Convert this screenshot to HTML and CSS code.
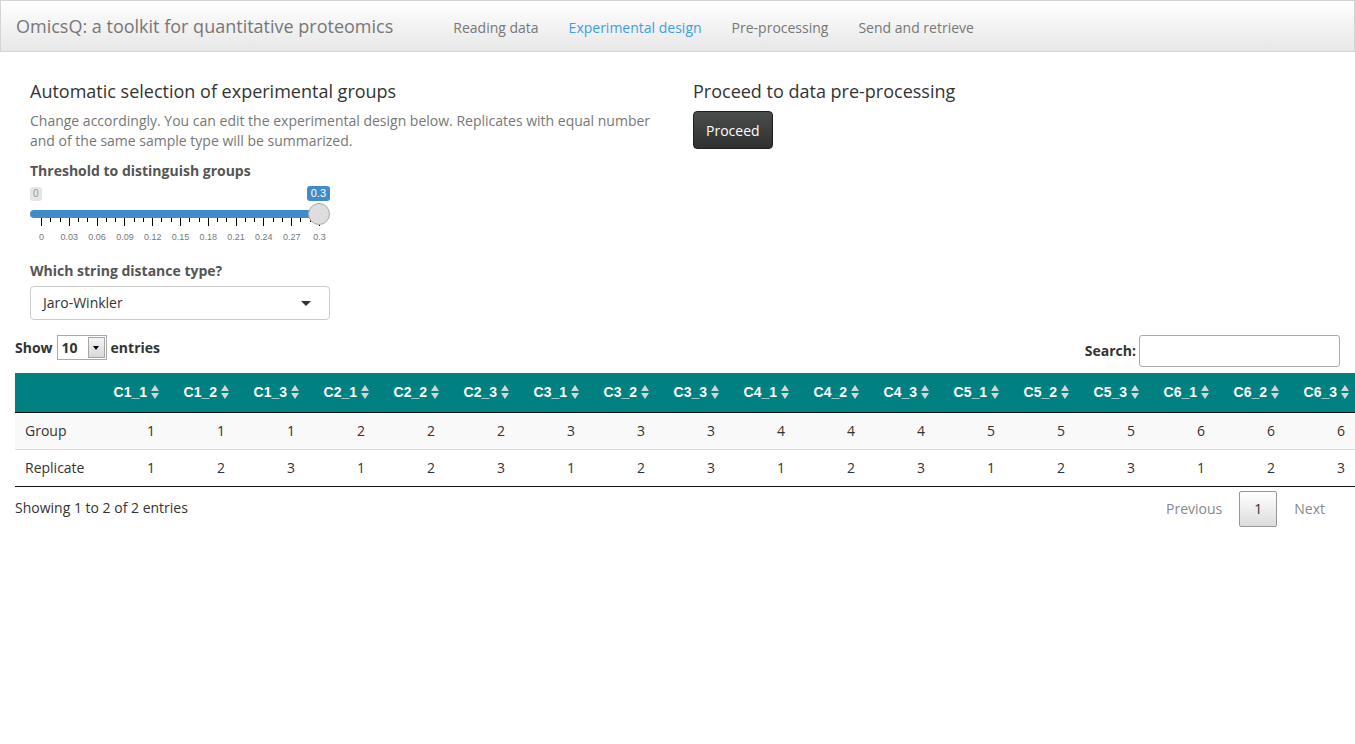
FILE: index.html
```html
<!DOCTYPE html>
<html>
<head>
<meta charset="utf-8">
<title>OmicsQ</title>
<link rel="stylesheet" href="styles.css">
</head>
<body>
<nav class="navbar">
  <span class="brand">OmicsQ: a toolkit for quantitative proteomics</span>
  <ul class="nav">
    <li><a>Reading data</a></li>
    <li class="active"><a>Experimental design</a></li>
    <li><a>Pre-processing</a></li>
    <li><a>Send and retrieve</a></li>
  </ul>
</nav>
<main class="content">
  <div class="top-row">
    <section class="col-left">
      <h4>Automatic selection of experimental groups</h4>
      <p class="help">Change accordingly. You can edit the experimental design below. Replicates with equal number and of the same sample type will be summarized.</p>
      <div class="form-group">
        <label class="ctl-label">Threshold to distinguish groups</label>
        <div class="irs">
          <div class="irs-labels">
            <span class="irs-min">0</span>
            <span class="irs-from">0.3</span>
          </div>
          <div class="irs-track">
            <div class="irs-bar"></div>
            <span class="irs-handle"></span>
          </div>
          <div class="irs-grid" id="grid"></div>
          <div class="irs-grid-text">
            <span><i>0</i></span><span><i>0.03</i></span><span><i>0.06</i></span><span><i>0.09</i></span><span><i>0.12</i></span><span><i>0.15</i></span><span><i>0.18</i></span><span><i>0.21</i></span><span><i>0.24</i></span><span><i>0.27</i></span><span><i>0.3</i></span>
          </div>
        </div>
      </div>
      <div class="form-group">
        <label class="ctl-label">Which string distance type?</label>
        <div class="selectize">
          <span>Jaro-Winkler</span>
          <span class="caret"></span>
        </div>
      </div>
    </section>
    <section class="col-right">
      <h4>Proceed to data pre-processing</h4>
      <button class="btn-dark">Proceed</button>
    </section>
  </div>

  <div class="dt-wrapper">
    <div class="dt-top">
      <div class="dt-length">
        <b>Show</b>
        <span class="native-select"><span class="val">10</span><span class="arrow-btn"><span class="tri"></span></span></span>
        <b>entries</b>
      </div>
      <div class="dt-filter">
        <b>Search:</b>
        <span class="search-input"></span>
      </div>
    </div>
    <div class="table-clip">
      <table class="dt">
        <colgroup>
          <col class="c-first">
          <col span="18" class="c-num">
        </colgroup>
        <thead>
          <tr>
            <th class="blank"></th>
            <th>C1_1<span class="sort"></span></th>
            <th>C1_2<span class="sort"></span></th>
            <th>C1_3<span class="sort"></span></th>
            <th>C2_1<span class="sort"></span></th>
            <th>C2_2<span class="sort"></span></th>
            <th>C2_3<span class="sort"></span></th>
            <th>C3_1<span class="sort"></span></th>
            <th>C3_2<span class="sort"></span></th>
            <th>C3_3<span class="sort"></span></th>
            <th>C4_1<span class="sort"></span></th>
            <th>C4_2<span class="sort"></span></th>
            <th>C4_3<span class="sort"></span></th>
            <th>C5_1<span class="sort"></span></th>
            <th>C5_2<span class="sort"></span></th>
            <th>C5_3<span class="sort"></span></th>
            <th>C6_1<span class="sort"></span></th>
            <th>C6_2<span class="sort"></span></th>
            <th>C6_3<span class="sort"></span></th>
          </tr>
        </thead>
        <tbody>
          <tr class="odd">
            <td>Group</td>
            <td>1</td><td>1</td><td>1</td><td>2</td><td>2</td><td>2</td><td>3</td><td>3</td><td>3</td>
            <td>4</td><td>4</td><td>4</td><td>5</td><td>5</td><td>5</td><td>6</td><td>6</td><td>6</td>
          </tr>
          <tr class="even">
            <td>Replicate</td>
            <td>1</td><td>2</td><td>3</td><td>1</td><td>2</td><td>3</td><td>1</td><td>2</td><td>3</td>
            <td>1</td><td>2</td><td>3</td><td>1</td><td>2</td><td>3</td><td>1</td><td>2</td><td>3</td>
          </tr>
        </tbody>
      </table>
    </div>
    <div class="dt-bottom">
      <div class="dt-info">Showing 1 to 2 of 2 entries</div>
      <div class="dt-paginate">
        <span class="pg disabled">Previous</span>
        <span class="pg current">1</span>
        <span class="pg disabled">Next</span>
      </div>
    </div>
  </div>
</main>
<script>
  (function () {
    var g = document.getElementById('grid');
    for (var i = 0; i <= 30; i++) {
      var t = document.createElement('span');
      t.className = (i % 3 === 0) ? 'tick big' : 'tick';
      g.appendChild(t);
    }
  })();
</script>
</body>
</html>
```

FILE: styles.css
```css
html, body {
  overflow-x: hidden;
}
body {
  margin: 0;
  font-family: "Open Sans", "Liberation Sans", sans-serif;
  font-size: 14px;
  line-height: 20px;
  color: #333;
  background: #fff;
}

/* navbar */
.navbar {
  display: flex;
  align-items: flex-start;
  height: 50px;
  border: 1px solid #d4d4d4;
  background: linear-gradient(to bottom, #ffffff 0%, #e7e7e7 100%);
}
.brand {
  padding: 15px 15px;
  font-size: 18px;
  line-height: 20px;
  color: #777;
}
.nav {
  display: flex;
  list-style: none;
  margin: 0 0 0 30px;
  padding: 0;
}
.nav a {
  display: block;
  padding: 17px 15px 13px;
  line-height: 20px;
  color: #777;
}
.nav .active a {
  color: #3c9fe5;
}

/* content */
.content {
  padding: 20px 15px 0;
}
.top-row {
  display: flex;
}
.col-left {
  width: 632px;
  padding-left: 15px;
  padding-right: 31px;
}
.col-right {
  flex: 1;
}
h4 {
  margin: 9px 0 10px;
  font-size: 18px;
  font-weight: 400;
  line-height: 20px;
  color: #333;
}
.help {
  margin: 0 0 10px;
  color: #777;
}
.form-group {
  width: 300px;
  margin-bottom: 15px;
}
.ctl-label {
  display: block;
  font-weight: 700;
  color: #555;
  margin-bottom: 5px;
}

/* slider */
.irs {
  width: 300px;
  font-family: "Liberation Sans", Arial, sans-serif;
}
.irs-labels {
  display: flex;
  justify-content: space-between;
  align-items: flex-start;
  height: 17px;
}
.irs-min {
  font-size: 10px;
  line-height: 14px;
  padding: 0 3px;
  color: #999;
  background: rgba(0, 0, 0, 0.1);
  border-radius: 3px;
  margin-top: 1px;
}
.irs-from {
  font-size: 11px;
  line-height: 15px;
  padding: 0 4px;
  color: #fff;
  background: #428bca;
  border-radius: 3px;
  margin-right: 0;
}
.irs-track {
  position: relative;
  height: 8px;
  padding-top: 7px;
}
.irs-bar {
  width: 295px;
  height: 8px;
  background: #428bca;
  border-radius: 8px;
}
.irs-handle {
  position: absolute;
  right: 0;
  top: 0;
  width: 20px;
  height: 20px;
  border-radius: 50%;
  border: 1px solid #aaa;
  background: #dedede;
  box-sizing: content-box;
}
.irs-grid {
  display: flex;
  justify-content: space-between;
  align-items: flex-start;
  width: 279px;
  margin-left: 11px;
  height: 8px;
}
.tick {
  width: 1px;
  height: 4px;
  background: #000;
}
.tick.big {
  height: 8px;
}
.irs-grid-text {
  display: flex;
  justify-content: space-between;
  width: 279px;
  margin-left: 11px;
  margin-top: 6px;
  height: 14px;
}
.irs-grid-text span {
  width: 1px;
  display: flex;
  justify-content: center;
}
.irs-grid-text i {
  font-style: normal;
  font-size: 9px;
  line-height: 11px;
  color: #777;
  white-space: nowrap;
}

/* selectize */
.selectize {
  display: flex;
  align-items: center;
  justify-content: space-between;
  box-sizing: border-box;
  height: 34px;
  padding: 0 18px 0 12px;
  border: 1px solid #ccc;
  border-radius: 4px;
  color: #333;
}
.caret {
  width: 0;
  height: 0;
  border-left: 5px solid transparent;
  border-right: 5px solid transparent;
  border-top: 5px solid #333;
}

/* button */
.btn-dark {
  height: 38px;
  padding: 0 12px;
  font-family: inherit;
  font-size: 14px;
  color: #fff;
  background: linear-gradient(to bottom, #4b4c4c 0%, #2f3030 100%);
  border: 1px solid #1f1f1f;
  border-radius: 4px;
}

/* datatable */
.dt-top {
  display: flex;
  justify-content: space-between;
  align-items: flex-start;
  height: 38px;
}
.dt-length {
  display: flex;
  align-items: center;
  gap: 4px;
  margin-top: 0;
}
.dt-length b, .dt-filter b {
  font-weight: 700;
}
.native-select {
  display: flex;
  align-items: stretch;
  box-sizing: border-box;
  width: 50px;
  height: 25px;
  border: 1px solid #aaa;
  background: #fff;
}
.native-select .val {
  flex: 1;
  padding-left: 4px;
  line-height: 23px;
  font-weight: 700;
}
.arrow-btn {
  width: 15px;
  margin: 1px;
  border: 1px solid #a6a6a6;
  background: linear-gradient(to bottom, #f4f4f4, #d8d8d8);
  display: flex;
  align-items: center;
  justify-content: center;
}
.tri {
  width: 0;
  height: 0;
  border-left: 3px solid transparent;
  border-right: 3px solid transparent;
  border-top: 4px solid #000;
}
.dt-filter {
  display: flex;
  align-items: center;
  gap: 3px;
}
.search-input {
  display: block;
  box-sizing: border-box;
  width: 201px;
  height: 32px;
  border: 1px solid #aaa;
  border-radius: 3px;
  background: #fff;
}
.table-clip {
  margin-right: -15px;
  overflow: hidden;
}
table.dt {
  table-layout: fixed;
  width: 1340px;
  border-collapse: collapse;
  border-spacing: 0;
}
col.c-first { width: 80px; }
col.c-num { width: 70px; }
table.dt th {
  position: relative;
  background: #008080;
  color: #fff;
  font-family: "Liberation Sans", Arial, sans-serif;
  font-weight: 700;
  font-size: 14px;
  line-height: 19px;
  text-align: right;
  padding: 10px 18px 10px 10px;
  border-bottom: 1px solid #111;
  white-space: nowrap;
}
.sort {
  position: absolute;
  right: 5px;
  top: 12px;
  width: 9px;
  height: 14px;
}
.sort::before, .sort::after {
  content: "";
  position: absolute;
  left: 0;
  width: 0;
  height: 0;
  border-left: 4.5px solid transparent;
  border-right: 4.5px solid transparent;
}
.sort::before {
  top: 0;
  border-bottom: 6px solid #cfd6d6;
}
.sort::after {
  bottom: 0;
  border-top: 6px solid #cfd6d6;
}
table.dt td {
  padding: 8px 10px;
  text-align: right;
  line-height: 20px;
}
table.dt td:first-child {
  text-align: left;
}
table.dt tr.odd td {
  background: #f9f9f9;
}
table.dt tr.even td {
  border-top: 1px solid #ddd;
  background: #fff;
}
table.dt tbody {
  border-bottom: 1px solid #111;
}
.dt-bottom {
  display: flex;
  justify-content: space-between;
  align-items: center;
  padding-top: 4px;
}
.dt-info {
  color: #333;
  margin-top: -2px;
}
.dt-paginate {
  display: flex;
  align-items: center;
}
.pg {
  box-sizing: border-box;
  padding: 8px 14px;
  margin-left: 2px;
  border: 1px solid transparent;
  border-radius: 2px;
  line-height: 18px;
  color: #888;
}
.pg.current {
  width: 38px;
  text-align: center;
  padding: 8px 0;
  color: #333;
  border: 1px solid #979797;
  background: linear-gradient(to bottom, #ffffff 0%, #dcdcdc 100%);
}
```
